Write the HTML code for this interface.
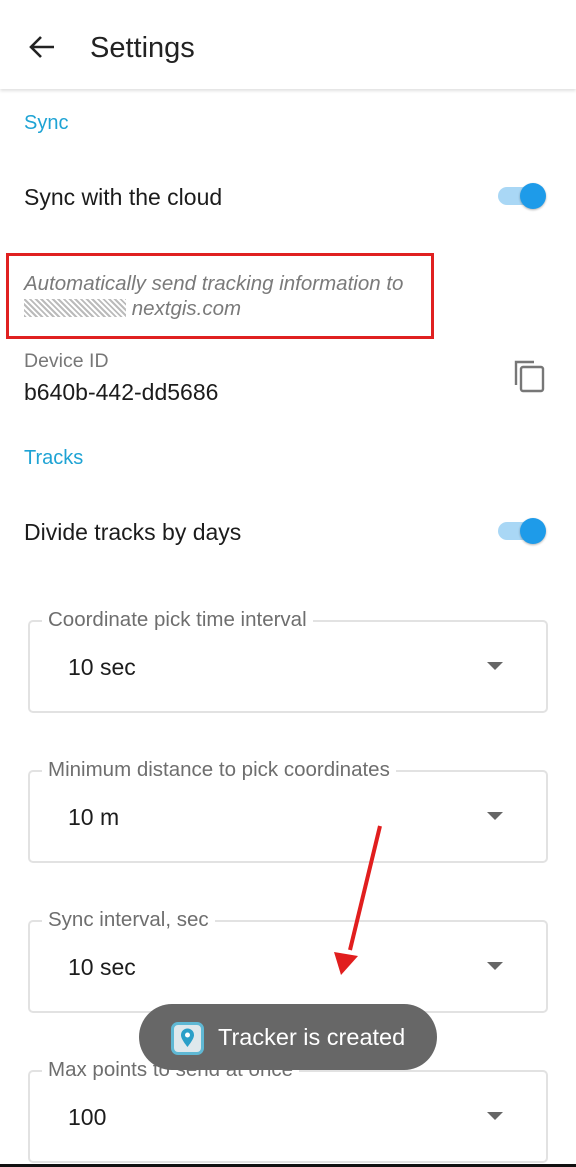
<!DOCTYPE html>
<html><head><meta charset="utf-8"><style>
*{margin:0;padding:0;box-sizing:border-box}
body{width:576px;height:1167px;background:#fff;position:relative;overflow:hidden;font-family:"Liberation Sans",Roboto,sans-serif;color:#1c1c1c}
.a{position:absolute;white-space:nowrap}
.hdr{position:absolute;left:0;top:0;width:576px;height:89px;background:#fff;box-shadow:0 2px 3px rgba(0,0,0,.12)}
.sec{color:#1ea3d4;font-size:20px}
.t{font-size:23px}
.sw{position:absolute;width:44px;height:18px;border-radius:9px;background:#a9d7f5}
.sw::after{content:"";position:absolute;right:-4px;top:-4px;width:26px;height:26px;border-radius:50%;background:#1e9be9;box-shadow:0 1px 2px rgba(0,0,0,.3)}
.box{position:absolute;left:28px;width:520px;height:93px;border:2px solid #e2e2e2;border-radius:5px}
.lbl{position:absolute;left:12px;top:-14px;background:#fff;padding:0 6px;font-size:20.5px;color:#6e6e6e}
.val{position:absolute;left:38px;top:32px;font-size:23px}
.dd{position:absolute;left:457px;top:40px;width:0;height:0;border-left:8px solid transparent;border-right:8px solid transparent;border-top:8px solid #666}
</style></head><body>
<div class="hdr"></div>
<svg class="a" style="left:28px;top:34px" width="28" height="26" viewBox="0 0 28 26"><path d="M26 13H4M13 3L3 13l10 10" fill="none" stroke="#222" stroke-width="2.6"/></svg>
<div class="a" style="left:90px;top:32px;font-size:29px;color:#222">Settings</div>
<div class="a sec" style="left:24px;top:112px">Sync</div>
<div class="a t" style="left:24px;top:184px">Sync with the cloud</div>
<div class="sw" style="left:498px;top:187px"></div>
<div class="a" style="left:6px;top:253px;width:428px;height:86px;border:3px solid #e02020"></div>
<div class="a" style="left:24px;top:271px;font-size:20.5px;font-style:italic;color:#7a7a7a;line-height:25px">Automatically send tracking information to<br><span style="display:inline-block;width:102px;height:18px;vertical-align:-2px;background:repeating-linear-gradient(45deg,#bbb 0 2px,#fff 2px 4px),#ccc"></span> nextgis.com</div>
<div class="a" style="left:24px;top:350px;font-size:19.5px;color:#777">Device ID</div>
<div class="a t" style="left:24px;top:379px">b640b-442-dd5686</div>
<svg class="a" style="left:513px;top:359px" width="34" height="34" viewBox="0 0 34 34"><path d="M3 26V3h18" fill="none" stroke="#777" stroke-width="2.4"/><rect x="8" y="8" width="22" height="24" rx="2" fill="none" stroke="#777" stroke-width="2.4"/></svg>
<div class="a sec" style="left:24px;top:447px">Tracks</div>
<div class="a t" style="left:24px;top:519px">Divide tracks by days</div>
<div class="sw" style="left:498px;top:522px"></div>

<div class="box" style="top:620px"><div class="lbl">Coordinate pick time interval</div><div class="val">10 sec</div><div class="dd"></div></div>
<div class="box" style="top:770px"><div class="lbl">Minimum distance to pick coordinates</div><div class="val">10 m</div><div class="dd"></div></div>
<div class="box" style="top:920px"><div class="lbl">Sync interval, sec</div><div class="val">10 sec</div><div class="dd"></div></div>
<div class="box" style="top:1070px"><div class="lbl">Max points to send at once</div><div class="val">100</div><div class="dd"></div></div>
<div class="a" style="left:0;top:1164px;width:576px;height:3px;background:#111"></div>

<svg class="a" style="left:0;top:0" width="576" height="1167"><path d="M380 826L350 950" stroke="#e11e1e" stroke-width="4"/><path d="M334 952L358 956L341 975Z" fill="#e11e1e"/></svg>

<div class="a" style="left:139px;top:1004px;width:298px;height:66px;border-radius:33px;background:#676767"></div>
<div class="a" style="left:171px;top:1022px;width:33px;height:33px;border-radius:7px;background:#dfe8ec;border:3px solid #5fb8d4"></div>
<svg class="a" style="left:179px;top:1027px" width="17" height="22" viewBox="0 0 17 22"><path d="M8.5 20C3 13 2 10 2 8a6.5 6.5 0 0113 0c0 2-1 5-6.5 12z" fill="#2a9fc8"/><circle cx="8.5" cy="8" r="2.5" fill="#fff"/></svg>
<div class="a" style="left:218px;top:1024px;font-size:23.5px;color:#fff">Tracker is created</div>
</body></html>
